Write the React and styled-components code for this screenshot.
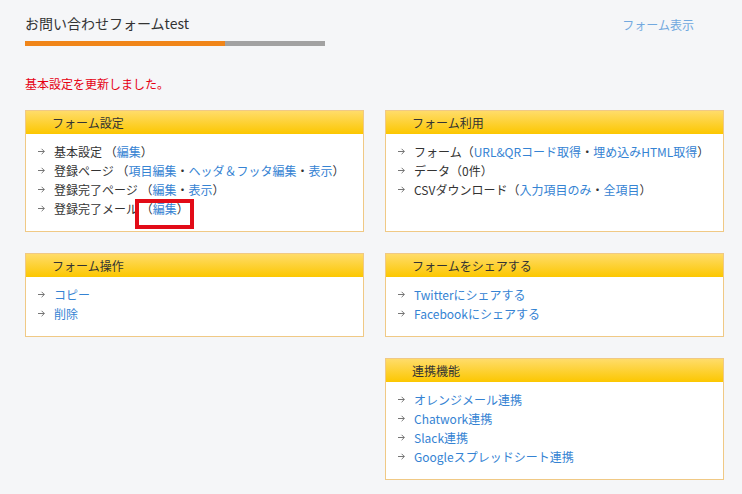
import React from 'react'
import styled, { createGlobalStyle } from 'styled-components'

const GlobalStyle = createGlobalStyle`
    body{
        margin: 0;
        background: #f5f6f8;
        font-family: "Noto Sans CJK JP", "Noto Sans", sans-serif;
        color: #333;
    }
`

const Page = styled.div`
    padding: 0 18px 0 25px;
    width: 699px;
`

const TitleRow = styled.div`
    display: flex;
    justify-content: space-between;
    align-items: flex-start;
`

const Title = styled.h1`
    margin: 14px 0 0;
    font-size: 14px;
    font-weight: 400;
    line-height: 18px;
    color: #333;
`

const Progress = styled.div`
    margin-top: 9px;
    width: 300px;
    height: 5px;
    background: linear-gradient(to right, #f08519 ${p => p.$value}%, #a2a2a2 ${p => p.$value}%);
`

const ViewLink = styled.a`
    margin: 16px 30px 0 0;
    font-size: 12px;
    line-height: 18px;
    color: #72a9df;
    text-decoration: none;
`

const Message = styled.p`
    margin: 28px 0 0;
    font-size: 12px;
    line-height: 19px;
    color: #e50012;
`

const Grid = styled.div`
    margin-top: 17px;
    display: grid;
    grid-template-columns: 339px 339px;
    column-gap: 21px;
    row-gap: 21px;
`

const Panel = styled.section`
    grid-column: ${p => p.$col};
    grid-row: ${p => p.$row};
    background: #fff;
    border: 1px solid #f0c985;
`

const PanelHead = styled.h2`
    margin: 0;
    height: 23px;
    padding-left: 26px;
    font-size: 12px;
    font-weight: 400;
    line-height: 24px;
    color: #333;
    background: linear-gradient(to bottom, #ffdc6a, #fcc700);
`

const List = styled.ul`
    list-style: none;
    margin: 0;
    padding: 8px 0 13px 12px;
`

const Item = styled.li`
    display: flex;
    align-items: center;
    font-size: 12px;
    line-height: 19px;
    white-space: nowrap;
`

const Arrow = styled.svg`
    flex: none;
    width: 7px;
    height: 7px;
    margin-right: 9px;
`

const Link = styled.a`
    color: #3583d3;
    text-decoration: none;
`

const Marked = styled.span`
    position: relative;
    &::after{
        content: "";
        position: absolute;
        left: -6px;
        right: -5px;
        top: -1px;
        bottom: -12px;
        border: 4px solid #e20b17;
    }
`

const Row = ({children}) => (
    <Item>
        <Arrow viewBox="0 0 7 7">
            <path d="M0 3.5H6.3M3.6 0.8L6.3 3.5L3.6 6.2" fill="none" stroke="#666" strokeWidth="0.9"/>
        </Arrow>
        <span>{children}</span>
    </Item>
)

const App = () => {
    return (
        <Page>
            <GlobalStyle/>
            <TitleRow>
                <div>
                    <Title>お問い合わせフォームtest</Title>
                    <Progress $value={66.7}/>
                </div>
                <ViewLink href="#">フォーム表示</ViewLink>
            </TitleRow>
            <Message>基本設定を更新しました。</Message>

            <Grid>
                <Panel $col={1} $row={1}>
                    <PanelHead>フォーム設定</PanelHead>
                    <List>
                        <Row>基本設定 （<Link href="#">編集</Link>）</Row>
                        <Row>登録ページ （<Link href="#">項目編集</Link>・<Link href="#">ヘッダ＆フッタ編集</Link>・<Link href="#">表示</Link>）</Row>
                        <Row>登録完了ページ （<Link href="#">編集</Link>・<Link href="#">表示</Link>）</Row>
                        <Row>登録完了メール <Marked>（<Link href="#">編集</Link>）</Marked></Row>
                    </List>
                </Panel>

                <Panel $col={2} $row={1}>
                    <PanelHead>フォーム利用</PanelHead>
                    <List>
                        <Row>フォーム（<Link href="#">URL&amp;QRコード取得</Link>・<Link href="#">埋め込みHTML取得</Link>）</Row>
                        <Row>データ（0件）</Row>
                        <Row>CSVダウンロード（<Link href="#">入力項目のみ</Link>・<Link href="#">全項目</Link>）</Row>
                    </List>
                </Panel>

                <Panel $col={1} $row={2}>
                    <PanelHead>フォーム操作</PanelHead>
                    <List>
                        <Row><Link href="#">コピー</Link></Row>
                        <Row><Link href="#">削除</Link></Row>
                    </List>
                </Panel>

                <Panel $col={2} $row={2}>
                    <PanelHead>フォームをシェアする</PanelHead>
                    <List>
                        <Row><Link href="#">Twitterにシェアする</Link></Row>
                        <Row><Link href="#">Facebookにシェアする</Link></Row>
                    </List>
                </Panel>

                <Panel $col={2} $row={3}>
                    <PanelHead>連携機能</PanelHead>
                    <List>
                        <Row><Link href="#">オレンジメール連携</Link></Row>
                        <Row><Link href="#">Chatwork連携</Link></Row>
                        <Row><Link href="#">Slack連携</Link></Row>
                        <Row><Link href="#">Googleスプレッドシート連携</Link></Row>
                    </List>
                </Panel>
            </Grid>
        </Page>
    )
}

export default App
